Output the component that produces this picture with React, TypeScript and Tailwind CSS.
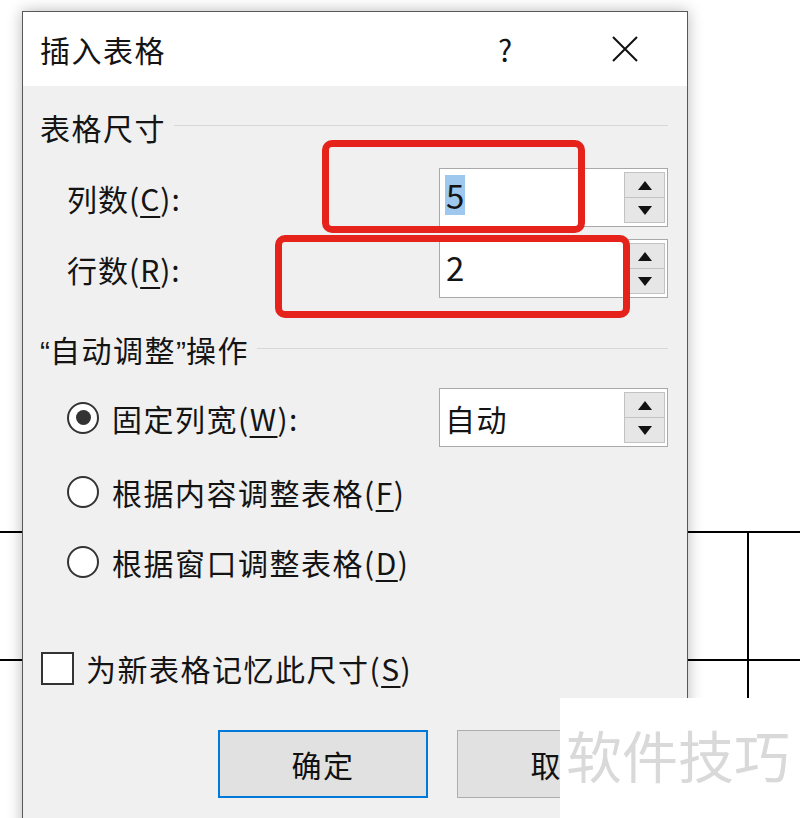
import React from "react";

const FONT = "font-['Noto_Sans_CJK_SC','Noto_Sans',sans-serif]";

function Spin() {
  return (
    <div className="flex flex-col w-[41px] h-full">
      <div className="flex-1 flex items-center justify-center bg-[#e6e6e6] border border-[#c2c2c2]">
        <svg width="14" height="9" viewBox="0 0 14 9">
          <path d="M7 0 L14 9 L0 9 Z" fill="#111" />
        </svg>
      </div>
      <div className="flex-1 flex items-center justify-center bg-[#e6e6e6] border border-t-0 border-[#c2c2c2]">
        <svg width="14" height="9" viewBox="0 0 14 9">
          <path d="M0 0 L14 0 L7 9 Z" fill="#111" />
        </svg>
      </div>
    </div>
  );
}

function SpinBox({ children }: { children: React.ReactNode }) {
  return (
    <div className="w-[229px] h-[59px] bg-white border border-[#a9a9a9] flex items-stretch pt-[3px] pb-[3px] pr-[2px]">
      <div className="flex-1 flex items-center pl-[5px]">{children}</div>
      <Spin />
    </div>
  );
}

function Radio({ checked }: { checked?: boolean }) {
  return (
    <span className="w-[32px] h-[32px] rounded-full border-2 border-[#333] bg-white flex items-center justify-center shrink-0">
      {checked && <span className="w-[15px] h-[15px] rounded-full bg-[#333]" />}
    </span>
  );
}

function Header({ children }: { children: React.ReactNode }) {
  return (
    <div className="h-[36px] flex items-center pr-[19px]">
      <span className="text-[30px] tracking-[1.5px] leading-none whitespace-nowrap">{children}</span>
      <span className="flex-1 h-px bg-[#d7d7d7] ml-[8px] -mt-[4px]" />
    </div>
  );
}

const U = ({ c }: { c: string }) => <span className="underline underline-offset-[5px] decoration-2">{c}</span>;
const Q = ({ c }: { c: string }) => <span className="font-['Liberation_Sans',sans-serif] tracking-normal">{c}</span>;

function Dialog() {
  return (
    <div className="w-[666px] h-[830px] border border-[#585858] bg-[#f0f0f0] shadow-[0_0_14px_rgba(0,0,0,0.28)]">
      {/* title bar */}
      <div className="h-[74px] bg-white flex items-center pl-[17px] pr-[42px]">
        <span className="flex-1 text-[30px] tracking-[1.5px] leading-none">插入表格</span>
        <span className="w-[40px] text-center text-[30px] leading-none">?</span>
        <span className="w-[40px] ml-[80px] flex justify-center">
          <svg width="26" height="26" viewBox="0 0 26 26">
            <path d="M1 1 L25 25 M25 1 L1 25" stroke="#111" strokeWidth="2" />
          </svg>
        </span>
      </div>

      {/* body */}
      <div className="pl-[17px] pt-[23px] text-[30px] leading-none">
        <Header>表格尺寸</Header>

        <div className="mt-[23px] h-[59px] flex items-center">
          <span className="w-[399px] pl-[27px] tracking-[1px]">
            列数(<U c="C" />):
          </span>
          <SpinBox>
            <span className="bg-[#9fc8ee] text-[33px] leading-[40px] px-[1px] -mt-[6px]">5</span>
          </SpinBox>
        </div>

        <div className="mt-[12px] h-[59px] flex items-center">
          <span className="w-[399px] pl-[27px] tracking-[1px]">
            行数(<U c="R" />):
          </span>
          <SpinBox>
            <span className="text-[33px] leading-[40px] px-[1px] -mt-[4px]">2</span>
          </SpinBox>
        </div>

        <div className="mt-[34px]">
          <Header>
            <Q c="“" />
            自动调整
            <Q c="”" />
            操作
          </Header>
        </div>

        <div className="mt-[20px] h-[59px] flex items-center">
          <span className="w-[399px] pl-[27px] flex items-center gap-[13px]">
            <Radio checked />
            <span className="tracking-[1.5px]">
              固定列宽(<U c="W" />):
            </span>
          </span>
          <SpinBox>
            <span className="tracking-[1.5px]">自动</span>
          </SpinBox>
        </div>

        <div className="mt-[15px] h-[60px] flex items-center pl-[27px] gap-[13px]">
          <Radio />
          <span className="tracking-[1.5px]">
            根据内容调整表格(<U c="F" />)
          </span>
        </div>

        <div className="mt-[10px] h-[60px] flex items-center pl-[27px] gap-[13px]">
          <Radio />
          <span className="tracking-[1.5px]">
            根据窗口调整表格(<U c="D" />)
          </span>
        </div>

        <div className="mt-[46px] h-[60px] flex items-center pl-[1px] gap-[12px]">
          <span className="w-[33px] h-[33px] border-2 border-[#333] bg-white shrink-0" />
          <span className="tracking-[1.5px]">
            为新表格记忆此尺寸(<U c="S" />)
          </span>
        </div>

        <div className="mt-[32px] h-[68px] flex justify-end gap-[29px] pr-[20px]">
          <button className="w-[210px] h-full bg-[#e1e1e1] border-2 border-[#0078d7] text-[30px] tracking-[1.5px] text-[#111]">
            确定
          </button>
          <button className="w-[210px] h-full bg-[#e1e1e1] border border-[#adadad] text-[30px] tracking-[1.5px] text-[#111]">
            取消
          </button>
        </div>
      </div>
    </div>
  );
}

export default function App() {
  return (
    <div className={`relative w-[800px] h-[818px] overflow-hidden bg-white text-[#141414] ${FONT}`}>
      {/* Word document table behind the dialog */}
      <div className="absolute left-0 top-[531px] w-full">
        {[0, 1].map((i) => (
          <div key={i} className="grid grid-cols-[749px_1fr] h-[128px] border-t-2 border-black">
            <div className="border-r-2 border-black" />
            <div />
          </div>
        ))}
      </div>

      <div className="relative pl-[22px] pt-[11px]">
        <Dialog />
      </div>

      {/* red annotation boxes */}
      <div className="absolute left-[322px] top-[140px] w-[263px] h-[93px] border-[7px] border-[#e6231b] rounded-[10px]" />
      <div className="absolute left-[275px] top-[235px] w-[355px] h-[83px] border-[7px] border-[#e6231b] rounded-[10px]" />

      {/* watermark */}
      <div className="absolute left-[560px] top-[698px] right-0 bottom-0 bg-white flex items-center pl-[6px] pb-[8px]">
        <span className="text-[56px] leading-none text-[#d9d9d9]">软件技巧</span>
      </div>
    </div>
  );
}
